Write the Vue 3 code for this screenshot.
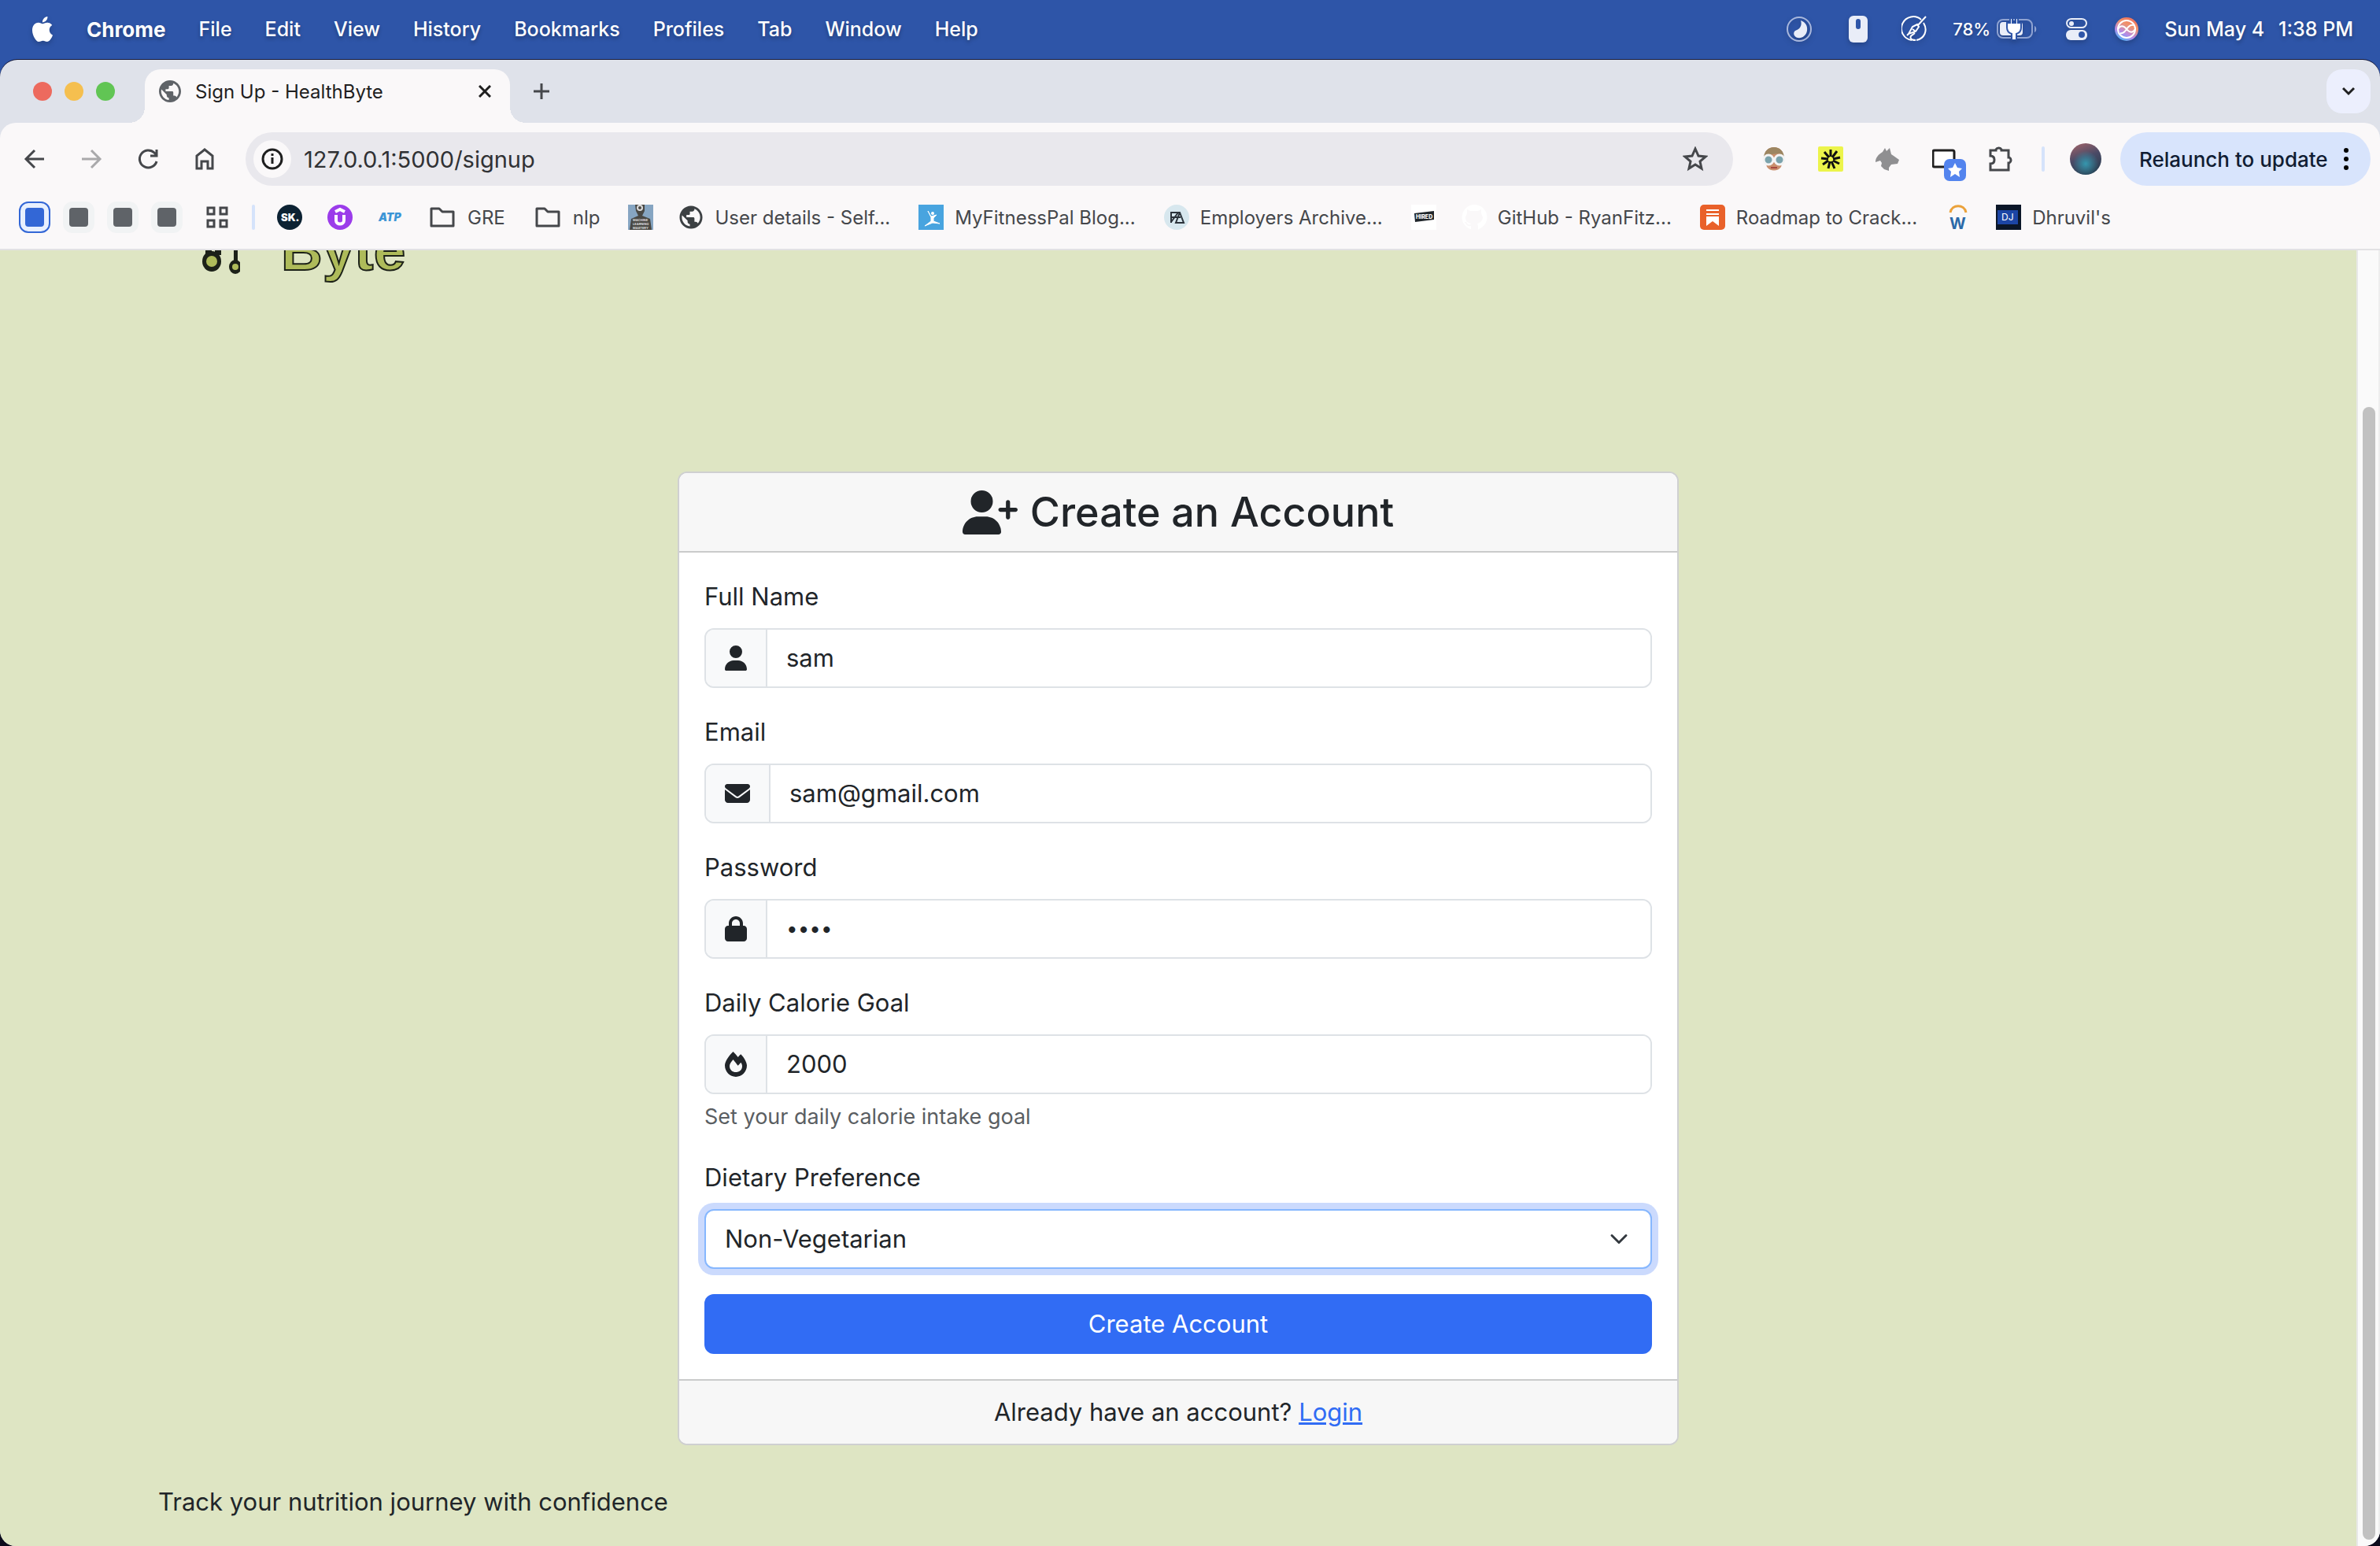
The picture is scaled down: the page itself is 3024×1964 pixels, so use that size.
<script setup>
import { ref } from 'vue'

const menus = ['File', 'Edit', 'View', 'History', 'Bookmarks', 'Profiles', 'Tab', 'Window', 'Help']

const bookmarks = [
  { icon: 'sk' },
  { icon: 'udemy' },
  { icon: 'atp' },
  { icon: 'folder', label: 'GRE' },
  { icon: 'folder', label: 'nlp' },
  { icon: 'mastery' },
  { icon: 'globe', label: 'User details - Self...' },
  { icon: 'fitness', label: 'MyFitnessPal Blog...' },
  { icon: 'fa', label: 'Employers Archive...' },
  { icon: 'hired' },
  { icon: 'github', label: 'GitHub - RyanFitz...' },
  { icon: 'roadmap', label: 'Roadmap to Crack...' },
  { icon: 'w' },
  { icon: 'dj', label: "Dhruvil's" },
]

const globePath =
  'M12 2C6.48 2 2 6.48 2 12s4.48 10 10 10 10-4.48 10-10S17.52 2 12 2zm-1 17.93c-3.95-.49-7-3.85-7-7.93 0-.62.08-1.21.21-1.79L9 15v1c0 1.1.9 2 2 2v1.93zm6.9-2.54c-.26-.81-1-1.39-1.9-1.39h-1v-3c0-.55-.45-1-1-1H8v-2h2c.55 0 1-.45 1-1V7h2c1.1 0 2-.9 2-2v-.41c2.93 1.19 5 4.06 5 7.41 0 2.08-.8 3.97-2.1 5.39z'

const fields = ref([
  {
    id: 'name', label: 'Full Name', type: 'text', value: 'sam', iconWidth: 28, viewBox: '0 0 448 512',
    path: 'M224 256A128 128 0 1 0 224 0a128 128 0 1 0 0 256zm-45.7 48C79.8 304 0 383.8 0 482.3C0 498.7 13.3 512 29.7 512H418.3c16.4 0 29.7-13.3 29.7-29.7C448 383.8 368.2 304 269.7 304H178.3z',
  },
  {
    id: 'email', label: 'Email', type: 'email', value: 'sam@gmail.com', iconWidth: 32, viewBox: '0 0 512 512',
    path: 'M48 64C21.5 64 0 85.5 0 112c0 15.1 7.1 29.3 19.2 38.4L236.8 313.6c11.4 8.5 27 8.5 38.4 0L492.8 150.4c12.1-9.1 19.2-23.3 19.2-38.4c0-26.5-21.5-48-48-48H48zM0 176V384c0 35.3 28.7 64 64 64H448c35.3 0 64-28.7 64-64V176L294.4 339.2c-22.8 17.1-54 17.1-76.8 0L0 176z',
  },
  {
    id: 'password', label: 'Password', type: 'password', value: 'abcd', iconWidth: 28, viewBox: '0 0 448 512',
    path: 'M144 144v48H304V144c0-44.2-35.8-80-80-80s-80 35.8-80 80zM80 192V144C80 64.5 144.5 0 224 0s144 64.5 144 144v48h16c35.3 0 64 28.7 64 64V448c0 35.3-28.7 64-64 64H64c-35.3 0-64-28.7-64-64V256c0-35.3 28.7-64 64-64H80z',
  },
  {
    id: 'calories', label: 'Daily Calorie Goal', type: 'text', value: '2000', iconWidth: 28, viewBox: '0 0 448 512',
    hint: 'Set your daily calorie intake goal',
    path: 'M323.56 51.2c-20.8 19.3-39.58 39.59-56.22 59.97C240.08 73.62 206.28 35.53 168 0 69.74 91.17 0 209.96 0 281.6 0 408.85 100.29 512 224 512s224-103.15 224-230.4c0-53.27-51.98-163.14-124.44-230.4zm-19.47 340.65C282.43 407.01 255.72 416 226.86 416 154.71 416 96 368.26 96 290.75c0-38.61 24.31-72.63 72.79-130.75 6.93 7.98 98.83 125.34 98.83 125.34l58.63-66.88c4.14 6.85 7.91 13.55 11.27 19.97 27.35 52.19 15.81 118.97-33.43 153.42z',
  },
])

const diet = ref('Non-Vegetarian')
const address = ref('127.0.0.1:5000/signup')
</script>

<template>
  <div class="screen">
    <header class="menubar">
      <nav class="menus">
        <svg class="apple" viewBox="2 0 20 24"><path fill="currentColor" d="M12.152 6.896c-.948 0-2.415-1.078-3.96-1.04-2.04.027-3.91 1.183-4.961 3.014-2.117 3.675-.546 9.103 1.519 12.09 1.013 1.454 2.208 3.09 3.792 3.039 1.52-.065 2.09-.987 3.935-.987 1.831 0 2.35.987 3.96.948 1.637-.026 2.676-1.48 3.676-2.948 1.156-1.688 1.636-3.325 1.662-3.415-.039-.013-3.182-1.221-3.22-4.857-.026-3.04 2.48-4.494 2.597-4.559-1.429-2.09-3.623-2.324-4.39-2.376-2-.156-3.675 1.09-4.61 1.09zM15.53 3.83c.843-1.012 1.4-2.427 1.245-3.83-1.207.052-2.662.805-3.532 1.818-.78.896-1.454 2.338-1.273 3.714 1.338.104 2.715-.688 3.559-1.701" /></svg>
        <strong class="app-name">Chrome</strong>
        <span v-for="m in menus" :key="m">{{ m }}</span>
      </nav>
      <div class="status">
        <svg width="32" height="32" viewBox="0 0 32 32">
          <circle cx="16" cy="16" r="15" fill="none" stroke="#a9b8dd" stroke-width="2" />
          <path d="M18 5c6 2 9 7 8 13-1 6-6 10-12 9-4-1-6-5-4-8 2-2 5-2 7-5 2-3 2-6 1-9z" fill="#e9edf8" />
        </svg>
        <svg width="48" height="36" viewBox="0 0 48 36">
          <rect x="14" y="1" width="24" height="34" rx="6" fill="#e9edf8" />
          <rect x="23" y="5" width="6" height="13" rx="3" fill="#2e55a8" />
        </svg>
        <svg width="32" height="34" viewBox="0 0 32 34" fill="none" stroke="#fff" stroke-width="2">
          <path d="M25 5a15 15 0 1 0-12 26M28 9c6 10 1 20-9 22" />
          <path d="M31 1L20 13M20 11l-6 3-5 9 9-3 4-6zM14 17l4 3M11 21l-4 4M17 22c-4 3-7 4-5 7 1 2 3 2 6 2" />
        </svg>
        <span class="battery">
          <span class="percent">78%</span>
          <svg width="52" height="28" viewBox="0 0 52 28">
            <rect x="1" y="2" width="44" height="23" rx="7" fill="none" stroke="#8fa3d2" stroke-width="2" />
            <rect x="4" y="5" width="29" height="17" rx="4" fill="#e9edf8" />
            <path d="M48 10v8c3-1 3-7 0-8z" fill="#8fa3d2" />
            <path d="M17 0h3v6h4V0h3v6h4v6c0 5-3 7-6 8v8h-6v-8c-3-1-6-3-6-8V6h4z" fill="#fff" stroke="#2e55a8" stroke-width="2" />
          </svg>
        </span>
        <svg width="32" height="30" viewBox="0 0 32 30">
          <rect x="4" y="2" width="25" height="11" rx="6" fill="none" stroke="#e9edf8" stroke-width="2" />
          <circle cx="10" cy="8" r="3" fill="#e9edf8" />
          <rect x="3" y="16" width="27" height="13" rx="6" fill="#e9edf8" />
          <circle cx="23" cy="22" r="4" fill="#2e55a8" />
        </svg>
        <svg width="30" height="30" viewBox="0 0 30 30">
          <defs>
            <linearGradient id="siri" x1="0.8" y1="0" x2="0.3" y2="1">
              <stop offset="0" stop-color="#ee6a5a" /><stop offset=".35" stop-color="#f0936a" />
              <stop offset=".7" stop-color="#b58be8" /><stop offset="1" stop-color="#4db4f5" />
            </linearGradient>
          </defs>
          <circle cx="15" cy="15" r="15" fill="url(#siri)" />
          <g fill="none" stroke="#fff" stroke-width="2">
            <circle cx="15" cy="15" r="11" />
            <path d="M4 15c3-5 7-5 11 0s8 5 11 0M7 20c4 1 6-2 8-5s5-6 9-5" />
          </g>
        </svg>
        <span class="clock"><span>Sun May 4</span><span>1:38 PM</span></span>
      </div>
    </header>

    <div class="window">
      <div class="tabstrip">
        <div class="lights"><i class="red"></i><i class="yellow"></i><i class="green"></i></div>
        <div class="tab">
          <svg class="globe tab-globe" viewBox="2 2 20 20"><path :d="globePath" /></svg>
          <span class="tab-title">Sign Up - HealthByte</span>
          <button class="plain" aria-label="Close tab">
            <svg width="16" height="16" viewBox="0 0 16 16"><path d="M1 1l14 14M15 1L1 15" stroke="#1f1f1f" stroke-width="3" /></svg>
          </button>
        </div>
        <button class="plain new-tab" aria-label="New tab">
          <svg width="20" height="20" viewBox="0 0 20 20"><path d="M10 0v20M0 10h20" stroke="#45474b" stroke-width="3" /></svg>
        </button>
        <button class="plain tab-search" aria-label="Search tabs">
          <svg width="16" height="12" viewBox="0 0 16 12"><path d="M1 2l7 7 7-7" fill="none" stroke="#1f1f1f" stroke-width="3" /></svg>
        </button>
      </div>

      <div class="toolbar">
        <div class="nav-buttons">
          <button class="plain" aria-label="Back">
            <svg width="28" height="28" viewBox="0 0 28 28"><path d="M26 14H4M14 3L3 14l11 11" fill="none" stroke="#45474b" stroke-width="3" /></svg>
          </button>
          <button class="plain" aria-label="Forward">
            <svg width="28" height="28" viewBox="0 0 28 28"><path d="M2 14h22M14 3l11 11-11 11" fill="none" stroke="#a9a9ab" stroke-width="3" /></svg>
          </button>
          <button class="plain" aria-label="Reload">
            <svg width="28" height="28" viewBox="0 0 28 28"><path d="M25 17a11 11 0 1 1-3-11l3 3M25 2v8h-8" fill="none" stroke="#45474b" stroke-width="3" /></svg>
          </button>
          <button class="plain" aria-label="Home">
            <svg width="28" height="30" viewBox="0 0 28 30"><path d="M4 27V11l10-8 10 8v16h-6v-9h-8v9z" fill="none" stroke="#45474b" stroke-width="3" /></svg>
          </button>
        </div>
        <div class="omnibox">
          <button class="plain site-info" aria-label="Site information">
            <svg width="28" height="28" viewBox="0 0 28 28"><circle cx="14" cy="14" r="12" fill="none" stroke="#1f1f1f" stroke-width="3" /><path d="M14 12v8M14 7v3" stroke="#1f1f1f" stroke-width="3" /></svg>
          </button>
          <input v-model="address" class="address" type="text" aria-label="Address" />
          <button class="plain" aria-label="Bookmark this page">
            <svg width="32" height="32" viewBox="0 0 32 32"><path d="M16 3l4 9 9 1-7 6 2 9-8-5-8 5 2-9-7-6 9-1z" fill="none" stroke="#45474b" stroke-width="3" /></svg>
          </button>
        </div>
        <div class="extensions">
          <button class="plain" aria-label="Disguise extension">
            <svg width="32" height="32" viewBox="0 0 32 32">
              <path d="M4 16C3 6 9 1 16 1s13 5 12 15l-3 10c-4 6-14 6-18 0z" fill="#c98f6d" />
              <path d="M3 15C3 6 9 1 16 1s13 5 13 14l-6-6-10 1-6 5z" fill="#9d8662" />
              <circle cx="9" cy="17" r="6" fill="#7ba3ac" stroke="#f4f4f4" stroke-width="3" />
              <circle cx="23" cy="17" r="6" fill="#7ba3ac" stroke="#f4f4f4" stroke-width="3" />
              <path d="M12 27h8" stroke="#a8483f" stroke-width="2" />
            </svg>
          </button>
          <button class="plain" aria-label="Burst extension">
            <svg width="32" height="32" viewBox="0 0 32 32">
              <rect width="32" height="32" rx="2" fill="#ecf44b" />
              <path d="M16 4v9M24 6l-6 8M28 14l-9 2M27 22l-8-4M21 28l-4-9M13 28l2-9M6 23l7-5M4 15l9 1M8 7l6 7" stroke="#111" stroke-width="3" />
            </svg>
          </button>
          <button class="plain" aria-label="Wolf extension">
            <svg width="32" height="30" viewBox="0 0 32 30"><path d="M10 6l3-5 2 4 4-4 2 8 3 2 7 5-2 5-8 1-3 4v4l-6-2-4-4 1-4-2-3-6 2c0-6 4-10 9-13z" fill="#8f8f91" /></svg>
          </button>
          <button class="plain badged" aria-label="Window extension">
            <svg width="30" height="26" viewBox="0 0 30 26"><rect x="1" y="2" width="27" height="21" rx="2" fill="#fff" stroke="#1f1f1f" stroke-width="3" /></svg>
            <svg class="ext-badge" width="28" height="28" viewBox="0 0 28 28"><rect width="28" height="28" rx="7" fill="#5384ee" /><path d="M14 5l3 6 6 1-4 4 1 7-6-4-6 4 1-7-4-4 6-1z" fill="#fff" /></svg>
          </button>
          <button class="plain" aria-label="Extensions">
            <svg width="34" height="34" viewBox="0 0 34 34"><path d="M4 6h7V5a4 4 0 0 1 7 0v1h9v9h1a4 4 0 0 1 0 7h-1v9H4v-8c4 0 5-2 5-5s-1-5-5-5z" fill="none" stroke="#45474b" stroke-width="3" /></svg>
          </button>
        </div>
        <span class="divider"></span>
        <span class="avatar"></span>
        <button class="relaunch">
          Relaunch to update
          <svg width="6" height="30" viewBox="0 0 6 30"><circle cx="3" cy="4" r="3" /><circle cx="3" cy="15" r="3" /><circle cx="3" cy="26" r="3" /></svg>
        </button>
      </div>

      <nav class="bookmarks">
        <div class="groups">
          <i class="group active"></i><i class="group"></i><i class="group"></i><i class="group"></i>
        </div>
        <svg class="grid-icon" width="28" height="28" viewBox="0 0 28 28" fill="none" stroke="#45474b" stroke-width="3"><rect x="2" y="2" width="8" height="8" /><rect x="18" y="2" width="8" height="8" /><rect x="2" y="18" width="8" height="8" /><rect x="18" y="18" width="8" height="8" /></svg>
        <span class="divider"></span>
        <a v-for="(b, i) in bookmarks" :key="i" href="#" class="bookmark" :aria-label="b.label || b.icon" :class="{ named: b.label, folder: b.icon === 'folder' }">
          <svg v-if="b.icon === 'globe'" class="mark globe" viewBox="1 1 22 22"><path :d="globePath" /></svg>
          <svg v-else class="mark" viewBox="0 0 32 32">
            <g v-if="b.icon === 'sk'">
              <circle cx="16" cy="16" r="16" fill="#0c2233" />
              <text x="5" y="21" font-size="13" font-weight="900" fill="#fff">SK.</text>
            </g>
            <g v-else-if="b.icon === 'udemy'">
              <circle cx="16" cy="16" r="16" fill="#9b3cea" />
              <path d="M10 9l6-3 6 3M11 13v7c0 6 10 6 10 0v-7" fill="none" stroke="#fff" stroke-width="4" />
            </g>
            <text v-else-if="b.icon === 'atp'" x="1" y="21" font-size="14" font-weight="900" font-style="italic" fill="#3c95d6">ATP</text>
            <path v-else-if="b.icon === 'folder'" d="M2 5h10l4 4h14v18H2z" fill="none" stroke="#45474b" stroke-width="3" stroke-linejoin="round" />
            <g v-else-if="b.icon === 'mastery'">
              <rect width="32" height="32" fill="#86a5c2" />
              <path d="M9 0h12v8l-3 6 10 4 2 14H2l2-14 9-4-3-6z" fill="#494844" />
              <circle cx="15" cy="4" r="3" fill="none" stroke="#ddd" stroke-width="2" />
              <text x="6" y="21" font-size="4" font-weight="700" fill="#ddd">MACHINE</text>
              <text x="6" y="26" font-size="4" font-weight="700" fill="#ddd">LEARNING</text>
              <text x="6" y="31" font-size="4" font-weight="700" fill="#ddd">MASTERY</text>
            </g>
            <g v-else-if="b.icon === 'fitness'">
              <rect width="32" height="32" fill="#48a4df" />
              <circle cx="18" cy="11" r="2" fill="#fff" />
              <path d="M12 8l4 7 7-2-4 4v4l8 3-9-1-10 4 8-6v-5z" fill="#fff" stroke="#fff" />
            </g>
            <g v-else-if="b.icon === 'fa'">
              <circle cx="16" cy="16" r="16" fill="#d7e7ee" />
              <path d="M9 23V10h11l5 13H15l5-13M9 16h12M9 22l9-12" fill="none" stroke="#2b333b" stroke-width="2" />
            </g>
            <g v-else-if="b.icon === 'hired'">
              <rect width="32" height="32" fill="#fff" />
              <path d="M4 11l25-3v11L5 22z" fill="#20262b" />
              <text x="6" y="18" font-size="7" font-weight="800" fill="#fff">HIRED</text>
            </g>
            <path v-else-if="b.icon === 'github'" fill="#fff" d="M16 0a16 16 0 0 0-5 31c1 0 1 0 1-1v-3c-5 1-6-2-6-2-2-3-3-3-1-3 2 0 2 2 3 3 2 1 4 0 4-1-5-1-7-4-7-8l2-5V6l4 2h10l4-2v5l2 5c0 4-3 7-7 8l1 3v4c0 1 1 1 1 0A16 16 0 0 0 16 0z" />
            <g v-else-if="b.icon === 'roadmap'">
              <rect width="32" height="32" rx="5" fill="#e9612a" />
              <path d="M8 7h16M8 12h16" stroke="#fff" stroke-width="2" /><path d="M8 15h16v12l-8-6-8 6z" fill="#fff" />
            </g>
            <g v-else-if="b.icon === 'w'">
              <path d="M6 10c2-11 18-11 20 0" fill="none" stroke="#eba23b" stroke-width="3" />
              <text x="5" y="31" font-size="20" font-weight="700" fill="#2b69a8">W</text>
            </g>
            <g v-else>
              <rect width="32" height="32" fill="#0b1628" />
              <rect x="2" y="7" width="26" height="18" fill="#1c45a5" />
              <text x="7" y="20" font-size="12" fill="#fff">DJ</text>
            </g>
          </svg>
          <span v-if="b.label">{{ b.label }}</span>
        </a>
      </nav>

      <div class="viewport">
        <div class="page">
          <div class="container">
            <div class="brand">
              <svg width="48" height="80" viewBox="0 0 48 80">
                <path d="M4 0h20v46H4z" fill="#1c2118" />
                <path d="M12 30h4v15h-4z" fill="#dee5c3" />
                <ellipse cx="12" cy="54" rx="12" ry="13" fill="#1c2118" /><ellipse cx="12" cy="54" rx="7" ry="7" fill="#aebb5a" />
                <path d="M40 20h5v38h-5z" fill="#1c2118" />
                <ellipse cx="42" cy="61" rx="8" ry="9" fill="#1c2118" /><circle cx="42" cy="61" r="4" fill="#aebb5a" />
              </svg>
              <span class="brand-name">Byte</span>
            </div>

            <form class="card" @submit.prevent>
              <h3 class="card-header">
                <svg width="70" height="56" viewBox="0 0 640 512"><path fill="currentColor" d="M96 128a128 128 0 1 1 256 0A128 128 0 1 1 96 128zM0 482.3C0 383.8 79.8 304 178.3 304h91.4C368.2 304 448 383.8 448 482.3c0 16.4-13.3 29.7-29.7 29.7H29.7C13.3 512 0 498.7 0 482.3zM504 312V248H440c-13.3 0-24-10.7-24-24s10.7-24 24-24h64V136c0-13.3 10.7-24 24-24s24 10.7 24 24v64h64c13.3 0 24 10.7 24 24s-10.7 24-24 24H552v64c0 13.3-10.7 24-24 24s-24-10.7-24-24z" /></svg>
                Create an Account
              </h3>
              <div class="card-body">
                <div v-for="f in fields" :key="f.id" class="field">
                  <label :for="f.id">{{ f.label }}</label>
                  <div class="input-group">
                    <span class="addon"><svg :width="f.iconWidth" height="32" :viewBox="f.viewBox"><path fill="currentColor" :d="f.path" /></svg></span>
                    <input :id="f.id" v-model="f.value" :type="f.type" autocomplete="off" />
                  </div>
                  <small v-if="f.hint" class="hint">{{ f.hint }}</small>
                </div>
                <div class="field">
                  <label for="diet">Dietary Preference</label>
                  <select id="diet" v-model="diet">
                    <option>Non-Vegetarian</option>
                    <option>Vegetarian</option>
                    <option>Vegan</option>
                  </select>
                </div>
                <button class="submit" type="submit">Create Account</button>
              </div>
              <p class="card-footer">Already have an account? <a href="#">Login</a></p>
            </form>

            <p class="tagline">Track your nutrition journey with confidence</p>
          </div>
        </div>
        <div class="scrollbar"><span class="thumb"></span></div>
      </div>
    </div>
  </div>
</template>

<style>
body {
  background: #0c0b1c;
}
</style>

<style scoped>
* {
  box-sizing: border-box;
}
.screen {
  display: flex;
  flex-direction: column;
  min-height: 100vh;
  background: linear-gradient(#2e55a8 50%, #0c0b1c 50%);
  font-family: Inter, "Liberation Sans", sans-serif;
  color: #212529;
}
svg {
  display: block;
  flex: none;
}
.plain {
  display: flex;
  align-items: center;
  justify-content: center;
  width: 48px;
  height: 48px;
  padding: 0;
  border: 0;
  background: none;
}

.menubar {
  display: flex;
  justify-content: space-between;
  align-items: center;
  height: 76px;
  padding: 0 34px 2px 40px;
  background: #2e55a8;
  color: #fff;
  font-size: 25px;
  font-weight: 500;
  text-shadow: 0 3px 5px rgba(0, 0, 0, 0.3);
}
.menubar svg {
  filter: drop-shadow(0 3px 3px rgba(0, 0, 0, 0.2));
}
.menus {
  display: flex;
  align-items: center;
  gap: 42px;
}
.apple {
  width: 28px;
  height: 32px;
}
.app-name {
  font-size: 26px;
  font-weight: 700;
}
.status,
.battery,
.clock {
  display: flex;
  align-items: center;
}
.status {
  gap: 33px;
}
.battery {
  gap: 8px;
}
.percent {
  font-size: 22px;
}
.clock {
  gap: 18px;
  white-space: nowrap;
}

.window {
  display: flex;
  flex-direction: column;
  flex: 1;
  border-radius: 22px 22px 20px 20px;
  overflow: hidden;
  background: #dfe2ea;
  box-shadow: 0 -1px 0 #14183a;
}
.tabstrip {
  display: flex;
  align-items: center;
  height: 80px;
  padding: 0 12px 0 42px;
}
.lights {
  display: flex;
  gap: 16px;
}
.lights i {
  width: 24px;
  height: 24px;
  border-radius: 50%;
}
.red {
  background: #ed6a5e;
}
.yellow {
  background: #f5bf4f;
}
.green {
  background: #61c554;
}
.tab {
  position: relative;
  display: flex;
  align-items: center;
  align-self: flex-end;
  width: 464px;
  height: 68px;
  margin-left: 38px;
  padding: 0 8px 12px 18px;
  border-radius: 20px 20px 0 0;
  background: #faf8f9;
}
.tab::before,
.tab::after {
  content: "";
  position: absolute;
  bottom: 0;
  width: 20px;
  height: 20px;
}
.tab::before {
  right: 100%;
  background: radial-gradient(circle at 0 0, transparent 20px, #faf8f9 20px);
}
.tab::after {
  left: 100%;
  background: radial-gradient(circle at 100% 0, transparent 20px, #faf8f9 20px);
}
.globe {
  fill: #3c4043;
}
.tab-globe {
  width: 28px;
  height: 28px;
  fill: #5f6368;
}
.tab-title {
  flex: 1;
  margin-left: 18px;
  font-size: 24px;
  color: #1f1f1f;
}
.new-tab {
  margin-left: 16px;
}
.tab-search {
  width: 56px;
  height: 56px;
  margin-left: auto;
  border-radius: 20px;
  background: #eceffd;
}

.toolbar {
  display: flex;
  align-items: center;
  height: 92px;
  padding: 0 12px 0 20px;
  border-radius: 20px 20px 0 0;
  background: #faf8f9;
}
.nav-buttons,
.extensions {
  display: flex;
  gap: 24px;
}
.omnibox {
  display: flex;
  align-items: center;
  flex: 1;
  height: 68px;
  margin: 0 28px;
  padding: 0 24px 0 10px;
  border-radius: 34px;
  background: #e9e8ed;
}
.site-info {
  border-radius: 50%;
  background: #faf8f9;
}
.address {
  flex: 1;
  padding: 0;
  margin-left: 16px;
  border: 0;
  background: none;
  font: 29px Inter, "Liberation Sans", sans-serif;
  color: #303134;
}
.badged {
  position: relative;
}
.ext-badge {
  position: absolute;
  right: -4px;
  bottom: -4px;
}
.divider {
  width: 4px;
  height: 32px;
  border-radius: 2px;
  background: #d5e3fb;
}
.extensions + .divider {
  margin: 0 32px 0 28px;
}
.avatar {
  width: 40px;
  height: 40px;
  border-radius: 50%;
  background: radial-gradient(circle at 50% 65%, #3597ae, transparent 50%), linear-gradient(160deg, #a5656a, #4a4a66 45%, #1f3a4a);
}
.relaunch {
  display: flex;
  align-items: center;
  justify-content: space-between;
  width: 318px;
  height: 68px;
  margin-left: 24px;
  padding: 0 28px 0 24px;
  border: 0;
  border-radius: 34px;
  background: #d8e4fc;
  font: 500 26px Inter, "Liberation Sans", sans-serif;
  color: #101c33;
  white-space: nowrap;
}

.bookmarks {
  display: flex;
  align-items: center;
  height: 70px;
  padding: 0 24px 12px;
  border-bottom: 2px solid #e2e1e4;
  background: #faf8f9;
}
.groups {
  display: flex;
  gap: 16px;
}
.group {
  width: 40px;
  height: 40px;
  border: 8px solid #f1f3f4;
  border-radius: 12px;
  background: #5f6368;
}
.group.active {
  border-color: #e8f0fe;
  background: #3367d6;
  outline: 2px solid #3367d6;
  outline-offset: -2px;
}
.grid-icon {
  margin: 0 30px;
}
.bookmarks .divider {
  margin-right: 28px;
}
.bookmark {
  display: flex;
  align-items: center;
  gap: 14px;
  margin-right: 32px;
  font-size: 24px;
  color: #45474b;
  text-decoration: none;
  white-space: nowrap;
}
.bookmark.named {
  margin-right: 36px;
}
.bookmark.folder {
  gap: 16px;
  margin-left: 2px;
}
.mark {
  width: 32px;
  height: 32px;
  overflow: visible;
}

.viewport {
  display: flex;
  flex: 1;
}
.page {
  flex: 1;
  overflow: hidden;
  background: #dee5c3;
}
.container {
  max-width: 2640px;
  margin: 0 auto;
  padding: 0 24px 32px;
}
.brand {
  display: flex;
  gap: 52px;
  height: 321px;
  margin-top: -40px;
  padding-left: 56px;
}
.brand-name {
  font: 700 73px/80px "Liberation Sans", sans-serif;
  color: #aebb5a;
  -webkit-text-stroke: 2px #1c2118;
}
.card {
  max-width: 1272px;
  margin: 0 auto;
  border: 2px solid #cfd0d1;
  border-radius: 12px;
  overflow: hidden;
  background: #fff;
  font-size: 31px;
  line-height: 48px;
}
.card-header {
  display: flex;
  align-items: center;
  justify-content: center;
  gap: 16px;
  margin: 0;
  padding: 16px 32px;
  border-bottom: 2px solid #cacbcb;
  background: #f7f7f7;
  font-size: 52px;
  font-weight: 500;
  line-height: 67px;
}
.card-body {
  display: flex;
  flex-direction: column;
  gap: 32px;
  padding: 32px;
}
.field {
  display: flex;
  flex-direction: column;
}
.field label {
  margin-bottom: 16px;
}
.input-group {
  display: flex;
  height: 76px;
  border: 2px solid #dee2e6;
  border-radius: 12px;
  overflow: hidden;
}
.addon {
  display: flex;
  align-items: center;
  padding: 0 24px;
  border-right: 2px solid #dee2e6;
  background: #f8f9fa;
}
.input-group input {
  flex: 1;
  min-width: 0;
  padding: 0 24px;
  border: 0;
  outline: 0;
  background: #fff;
  font: inherit;
  color: inherit;
}
.input-group input[type="password"] {
  font-size: 26px;
}
.hint {
  margin-top: 8px;
  font-size: 27px;
  line-height: 42px;
  color: #5a5e62;
}
select {
  height: 76px;
  padding: 0 72px 0 24px;
  appearance: none;
  border: 2px solid #86b7fe;
  border-radius: 12px;
  outline: 0;
  box-shadow: 0 0 0 8px #cbdafd;
  background: #fff url("data:image/svg+xml,%3Csvg xmlns='http://www.w3.org/2000/svg' viewBox='0 0 16 16'%3E%3Cpath fill='none' stroke='%23343a40' stroke-linecap='round' stroke-linejoin='round' stroke-width='2' d='m2 5 6 6 6-6'/%3E%3C/svg%3E") no-repeat right 28px center / 24px 24px;
  font: inherit;
  color: inherit;
}
.submit {
  height: 76px;
  border: 0;
  border-radius: 12px;
  background: #316cf4;
  font: inherit;
  color: #fff;
}
.card-footer {
  margin: 0;
  padding: 16px 32px;
  border-top: 2px solid #cacbcb;
  background: #f7f7f7;
  text-align: center;
}
.card-footer a {
  color: #316cf4;
}
.tagline {
  margin: 48px 0 0;
  font-size: 31px;
  line-height: 48px;
}
.scrollbar {
  width: 30px;
  padding: 199px 4px 8px 6px;
  border-left: 2px solid #e8e8e8;
  border-right: 2px solid #eeeeee;
  background: #fafafa;
}
.thumb {
  display: block;
  height: 100%;
  border-radius: 8px;
  background: #c1c1c1;
}
</style>
